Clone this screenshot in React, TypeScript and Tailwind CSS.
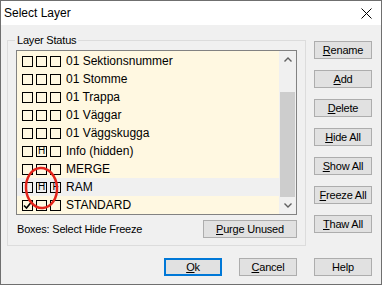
import type { ReactNode } from "react";

type Layer = {
  name: string;
  boxes: [string, string, string];
  selected?: boolean;
};

const layers: Layer[] = [
  { name: "01 Sektionsnummer", boxes: ["", "", ""] },
  { name: "01 Stomme", boxes: ["", "", ""] },
  { name: "01 Trappa", boxes: ["", "", ""] },
  { name: "01 Väggar", boxes: ["", "", ""] },
  { name: "01 Väggskugga", boxes: ["", "", ""] },
  { name: "Info (hidden)", boxes: ["", "H", ""] },
  { name: "MERGE", boxes: ["", "", ""] },
  { name: "RAM", boxes: ["", "H", "F"], selected: true },
  { name: "STANDARD", boxes: ["check", "", ""] },
];

const font = "font-['Liberation_Sans',Arial,sans-serif]";

const Box = ({ mark }: { mark: string }) => (
  <div className="w-[11px] h-[11px] border border-black flex items-center justify-center">
    {mark === "check" ? (
      <svg width="9" height="9" viewBox="0 0 9 9">
        <path d="M1 4.5 L3.5 7 L8 1.5" fill="none" stroke="#000" strokeWidth="1.6" />
      </svg>
    ) : mark ? (
      <span className="text-[10px] leading-none text-black">{mark}</span>
    ) : null}
  </div>
);

const Btn = ({
  children,
  w = "w-[58px]",
  primary,
}: {
  children: ReactNode;
  w?: string;
  primary?: boolean;
}) => (
  <div
    className={`${w} h-[18px] flex items-center justify-center text-[11px] tracking-[-0.2px] text-black bg-[#e1e1e1] ${
      primary ? "border-2 border-[#0078d7]" : "border border-[#adadad]"
    }`}
  >
    {children}
  </div>
);

const U = ({ c }: { c: string }) => <span className="underline underline-offset-[1px]">{c}</span>;

const Chevron = ({ up }: { up?: boolean }) => (
  <svg width="8" height="5" viewBox="0 0 8 5">
    <path
      d={up ? "M0.5 4.5 L4 1 L7.5 4.5" : "M0.5 0.5 L4 4 L7.5 0.5"}
      fill="none"
      stroke="#606060"
      strokeWidth="1.4"
    />
  </svg>
);

export default function App() {
  return (
    <div className={`w-[382px] h-[285px] border border-[#6f6f6f] bg-[#f0f0f0] flex flex-col ${font}`}>
      {/* title bar */}
      <div className="h-[24px] bg-white flex items-center justify-between pl-[3px] pr-[9px]">
        <span className="text-[12px] text-black">Select Layer</span>
        <svg width="11" height="11" viewBox="0 0 11 11">
          <path d="M0.5 0.5 L10.5 10.5 M10.5 0.5 L0.5 10.5" stroke="#000" strokeWidth="1" />
        </svg>
      </div>

      <div className="flex items-start pl-[6px] pt-[15px]">
        {/* group box */}
        <div className="relative w-[299px] h-[206px] border border-[#dcdcdc] pt-[9px] px-[8px]">
          <span className="absolute -top-[8px] left-[7px] px-[2px] bg-[#f0f0f0] text-[11px] tracking-[-0.2px] leading-[14px] text-black">
            Layer Status
          </span>

          <div className="relative w-[281px] h-[165px] border border-[#828282] bg-[#fff8e1] flex">
            <div className="flex-1 flex flex-col pt-[1px]">
              {layers.map((l) => (
                <div
                  key={l.name}
                  className={`h-[18px] flex items-center pl-[5px] ${l.selected ? "bg-[#f0f0f0]" : ""}`}
                >
                  <div className="flex gap-[3px]">
                    {l.boxes.map((b, i) => (
                      <Box key={i} mark={b} />
                    ))}
                  </div>
                  <span className="ml-[5px] text-[12px] text-black leading-none">{l.name}</span>
                </div>
              ))}
            </div>

            {/* scrollbar */}
            <div className="w-[17px] bg-[#f0f0f0] flex flex-col">
              <div className="h-[17px] flex items-center justify-center">
                <Chevron up />
              </div>
              <div className="flex-1 flex flex-col pt-[24px]">
                <div className="flex-1 bg-[#cdcdcd] mx-[1px]" />
              </div>
              <div className="h-[17px] flex items-center justify-center">
                <Chevron />
              </div>
            </div>

            {/* red annotation ellipse */}
            <svg
              className="absolute left-[6px] top-[114px] pointer-events-none"
              width="38"
              height="46"
              viewBox="0 0 38 46"
            >
              <ellipse
                cx="18.5"
                cy="23"
                rx="15.5"
                ry="20"
                transform="rotate(-4 18.5 23)"
                fill="none"
                stroke="#e3241b"
                strokeWidth="2.5"
              />
            </svg>
          </div>

          <div className="flex items-center justify-between mt-[5px]">
            <span className="ml-[1px] text-[11px] tracking-[-0.2px] text-black">Boxes: Select Hide Freeze</span>
            <Btn w="w-[94px]">
              <U c="P" />
              urge Unused
            </Btn>
          </div>
        </div>

        {/* right buttons */}
        <div className="ml-[8px] pt-[1px] flex flex-col gap-[11px]">
          <Btn>
            <U c="R" />
            ename
          </Btn>
          <Btn>
            <U c="A" />
            dd
          </Btn>
          <Btn>
            <U c="D" />
            elete
          </Btn>
          <Btn>
            <U c="H" />
            ide All
          </Btn>
          <Btn>
            <U c="S" />
            how All
          </Btn>
          <Btn>
            <U c="F" />
            reeze All
          </Btn>
          <Btn>
            <U c="T" />
            haw All
          </Btn>
        </div>
      </div>

      {/* bottom buttons */}
      <div className="flex justify-end gap-[17px] pr-[9px] mt-[12px]">
        <Btn primary>
          <U c="O" />k
        </Btn>
        <Btn>
          <U c="C" />
          ancel
        </Btn>
        <Btn>Help</Btn>
      </div>
    </div>
  );
}
